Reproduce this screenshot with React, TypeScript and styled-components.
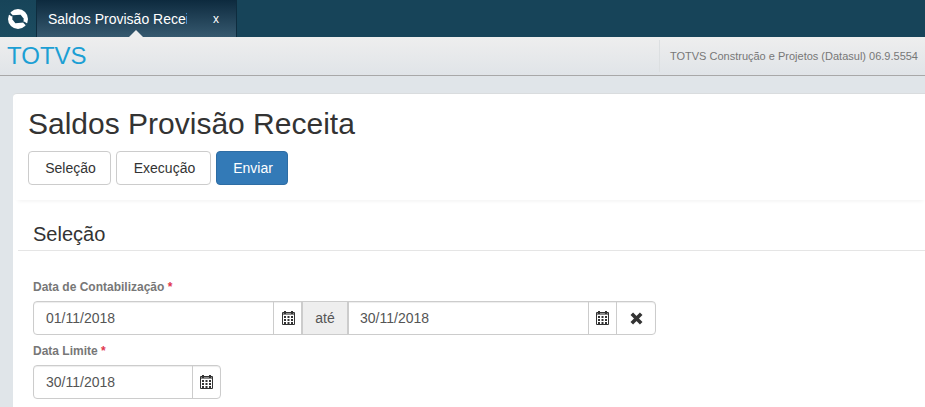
import styled, { createGlobalStyle } from "styled-components";

const GlobalStyle = createGlobalStyle`
    html, body {
        margin: 0;
        padding: 0;
        height: 100%;
        overflow: hidden;
        background: #e0e5e9;
        font-family: "Liberation Sans", Arial, sans-serif;
    }
`;

const LogoIcon = () => (
    <svg width="20" height="20" viewBox="0 0 20 20">
        <circle cx="10" cy="10" r="10" fill="#fff" />
        <path
            d="M4.4 6.2 L12.6 5.8 L15.6 9.6 L15.6 13.6 L7.4 14.2 L4.4 10.4 Z"
            fill="#174459"
        />
        <path d="M2 3.6 L5 6.4 L4 7.4 L0.8 5.4 Z" fill="#174459" />
        <path d="M18 16.4 L15 13.6 L16 12.6 L19.2 14.6 Z" fill="#174459" />
    </svg>
);

const calendarCells = [2, 5.5, 9];

const CalendarIcon = () => (
    <svg width="13" height="14" viewBox="0 0 13 14">
        <path d="M0.5 1.5H12.5V13.5H0.5Z" fill="#fff" stroke="#333" />
        <rect x="1" y="2" width="11" height="2" fill="#8a8a8a" />
        <rect x="2" y="0" width="2" height="3" fill="#333" />
        <rect x="9" y="0" width="2" height="3" fill="#333" />
        {calendarCells.map((x) =>
            [5, 8, 11].map((y) => (
                <rect key={`${x}-${y}`} x={x} y={y} width="2" height="2" fill="#333" />
            ))
        )}
    </svg>
);

const CloseIcon = () => (
    <svg width="13" height="13" viewBox="0 0 13 13">
        <path d="M1.8 1.8L11.2 11.2M11.2 1.8L1.8 11.2" stroke="#333" strokeWidth="3.6" />
    </svg>
);

const App = () => {
    return (
        <>
            <GlobalStyle />
            <TopBar>
                <LogoBox>
                    <LogoIcon />
                </LogoBox>
                <Tab>
                    <TabTitle>Saldos Provisão Receita</TabTitle>
                    <TabClose>x</TabClose>
                </Tab>
            </TopBar>

            <Header>
                <Brand>TOTVS</Brand>
                <Version>TOTVS Construção e Projetos (Datasul) 06.9.5554</Version>
            </Header>

            <Card>
                <PageHead>
                    <Title>Saldos Provisão Receita</Title>
                    <Actions>
                        <Button $width={83}>Seleção</Button>
                        <Button $width={95}>Execução</Button>
                        <Button $width={72} $primary>Enviar</Button>
                    </Actions>
                </PageHead>

                <SectionTitle>Seleção</SectionTitle>

                <Form>
                    <Label>Data de Contabilização <Req>*</Req></Label>
                    <InputGroup $width={623}>
                        <DateInput $width={239}>01/11/2018</DateInput>
                        <Addon $width={29}><CalendarIcon /></Addon>
                        <Between>até</Between>
                        <DateInput>30/11/2018</DateInput>
                        <Addon $width={28}><CalendarIcon /></Addon>
                        <Addon $width={39}><CloseIcon /></Addon>
                    </InputGroup>

                    <Label>Data Limite <Req>*</Req></Label>
                    <InputGroup $width={188}>
                        <DateInput>30/11/2018</DateInput>
                        <Addon $width={28}><CalendarIcon /></Addon>
                    </InputGroup>
                </Form>
            </Card>
        </>
    );
};

const TopBar = styled.div`
    display: flex;
    height: 37px;
    background: #174459;
`;

const LogoBox = styled.div`
    display: flex;
    align-items: center;
    justify-content: center;
    width: 36px;
    height: 37px;
    background: linear-gradient(to bottom, #174459, #1c4c60);
    border-right: 1px solid #0e2c3e;
`;

const Tab = styled.div`
    position: relative;
    display: flex;
    align-items: center;
    box-sizing: border-box;
    width: 200px;
    height: 37px;
    padding-left: 11px;
    background: linear-gradient(to bottom, #0d2a3e, #36596f);
    border-right: 1px solid #0e2c3e;

    &::after {
        content: "";
        position: absolute;
        left: 92px;
        bottom: 0;
        border-left: 7px solid transparent;
        border-right: 7px solid transparent;
        border-bottom: 7px solid #eeeeee;
    }
`;

const TabTitle = styled.span`
    width: 139px;
    overflow: hidden;
    white-space: nowrap;
    font-size: 14px;
    color: #ffffff;
`;

const TabClose = styled.span`
    margin-left: 26px;
    font-size: 12px;
    color: #ffffff;
`;

const Header = styled.div`
    display: flex;
    align-items: center;
    justify-content: space-between;
    box-sizing: border-box;
    height: 39px;
    padding: 0 7px;
    background: linear-gradient(to bottom, #eeeeee, #e0e4e8);
    border-bottom: 1px solid #a8a8a8;
`;

const Brand = styled.div`
    font-size: 24px;
    line-height: 38px;
    color: #1c9fd4;
`;

const Version = styled.div`
    display: flex;
    align-items: center;
    height: 32px;
    padding-left: 10px;
    border-left: 1px solid #dcdfe1;
    font-size: 11px;
    color: #777777;
`;

const Card = styled.div`
    box-sizing: border-box;
    height: 314px;
    margin: 17px 0 0 13px;
    background: #ffffff;
    border-radius: 4px 0 0 0;
    border-top: 1px solid #d9dcde;
`;

const PageHead = styled.div`
    box-sizing: border-box;
    height: 106px;
    margin-left: 3px;
    padding: 0 0 0 12px;
    box-shadow: 0 3px 4px -2px rgba(0, 0, 0, 0.06);
`;

const Title = styled.h1`
    margin: 0;
    padding-top: 13px;
    font-size: 30px;
    line-height: 33px;
    font-weight: 400;
    color: #333333;
`;

const Actions = styled.div`
    display: flex;
    gap: 5px;
    margin-top: 11px;
`;

const Button = styled.button<{ $primary?: boolean; $width: number }>`
    box-sizing: border-box;
    width: ${({ $width }) => $width}px;
    height: 34px;
    padding: 0 0 0 2px;
    font-family: inherit;
    font-size: 14px;
    border-radius: 4px;
    border: 1px solid ${({ $primary }) => ($primary ? "#2e6da4" : "#cccccc")};
    background: ${({ $primary }) => ($primary ? "#337ab7" : "#ffffff")};
    color: ${({ $primary }) => ($primary ? "#ffffff" : "#333333")};
`;

const SectionTitle = styled.h3`
    box-sizing: border-box;
    height: 51px;
    margin: 0 0 0 5px;
    padding: 23px 0 0 15px;
    font-size: 20px;
    line-height: 22px;
    font-weight: 400;
    color: #333333;
    border-bottom: 1px solid #e5e5e5;
`;

const Form = styled.div`
    padding: 29px 0 0 20px;
`;

const Label = styled.div`
    height: 15px;
    margin-bottom: 6px;
    font-size: 12px;
    line-height: 15px;
    font-weight: 700;
    color: #777777;

    & ~ & {
        margin-top: 9px;
    }
`;

const Req = styled.span`
    color: #e0364f;
`;

const InputGroup = styled.div<{ $width: number }>`
    display: flex;
    box-sizing: border-box;
    width: ${({ $width }) => $width}px;
    height: 34px;
    border: 1px solid #cccccc;
    border-radius: 4px;
    box-shadow: inset 0 1px 1px rgba(0, 0, 0, 0.075);
`;

const DateInput = styled.div<{ $width?: number }>`
    flex: ${({ $width }) => ($width ? `0 0 ${$width}px` : "1")};
    box-sizing: border-box;
    padding-left: 12px;
    font-size: 14px;
    line-height: 32px;
    color: #555555;
`;

const Addon = styled.div<{ $width: number }>`
    display: flex;
    align-items: center;
    justify-content: center;
    box-sizing: border-box;
    width: ${({ $width }) => $width}px;
    border-left: 1px solid #cccccc;
`;

const Between = styled.div`
    box-sizing: border-box;
    width: 46px;
    text-align: center;
    font-size: 14px;
    line-height: 32px;
    color: #555555;
    background: #eeeeee;
    border-left: 1px solid #cccccc;
    border-right: 1px solid #cccccc;
    box-shadow: -1px 0 #cccccc, 1px 0 #cccccc;
`;

export default App;
